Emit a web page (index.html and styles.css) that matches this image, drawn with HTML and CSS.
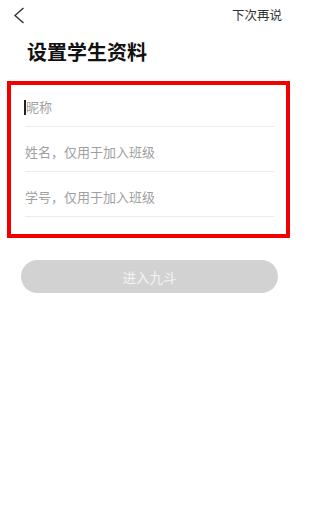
FILE: index.html
```html
<!DOCTYPE html>
<html lang="zh">
<head>
<meta charset="utf-8">
<title>设置学生资料</title>
<link rel="stylesheet" href="styles.css">
</head>
<body>
<div class="page">
  <div class="topbar">
    <svg class="back" width="12" height="17" viewBox="0 0 12 17"><polyline points="10.5,1 2,8.5 10.5,16" fill="none" stroke="#333" stroke-width="1.4"/></svg>
    <span class="skip">下次再说</span>
  </div>
  <h1 class="title">设置学生资料</h1>
  <div class="form">
    <div class="row first"><span class="caret"></span><span class="ph">昵称</span></div>
    <div class="row"><span class="ph">姓名，仅用于加入班级</span></div>
    <div class="row"><span class="ph">学号，仅用于加入班级</span></div>
  </div>
  <div class="btn">进入九斗</div>
</div>
</body>
</html>
```
FILE: styles.css
```css
html, body {
  margin: 0;
  padding: 0;
  background: #fff;
}
body {
  font-family: "Noto Sans CJK SC", "Noto Sans", sans-serif;
  width: 300px;
  height: 516px;
  overflow: hidden;
}
.topbar {
  height: 30px;
  display: flex;
  align-items: center;
  justify-content: space-between;
  padding: 0 18px 0 13px;
}
.back {
  display: block;
  margin-top: 0;
}
.skip {
  font-size: 12.5px;
  color: #333;
  line-height: 14px;
}
.title {
  margin: 10px 0 0 27px;
  font-size: 20px;
  line-height: 24px;
  font-weight: bold;
  color: #111;
}
.form {
  box-sizing: border-box;
  margin: 17px 0 0 7px;
  width: 283px;
  height: 157px;
  border: 4px solid #f20000;
  padding: 0 12px 0 14px;
}
.row {
  box-sizing: border-box;
  height: 45px;
  border-bottom: 1px solid #ececec;
  display: flex;
  align-items: flex-end;
  padding-bottom: 11px;
}
.row.first {
  height: 42px;
}
.ph {
  font-size: 13px;
  line-height: 16px;
  color: #a0a0a0;
}
.caret {
  display: inline-block;
  width: 1.5px;
  height: 15px;
  background: #222;
  margin-right: 0.5px;
  margin-left: -1px;
  margin-bottom: 0.5px;
}
.btn {
  margin: 22px 0 0 21px;
  width: 257px;
  height: 33px;
  border-radius: 17px;
  background: #d2d2d2;
  color: #f4f4f4;
  font-size: 13.5px;
  display: flex;
  align-items: center;
  justify-content: center;
}
```
